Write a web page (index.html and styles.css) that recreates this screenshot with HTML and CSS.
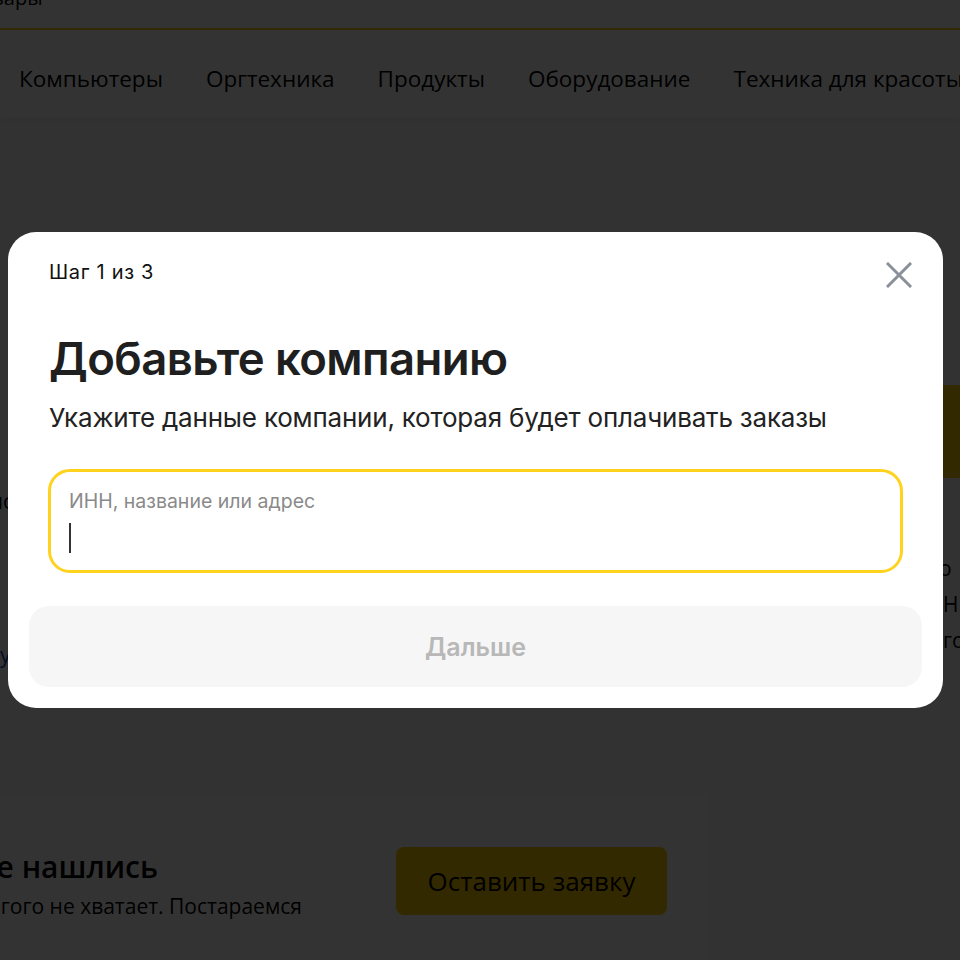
FILE: index.html
```html
<!DOCTYPE html>
<html lang="ru">
<head>
<meta charset="utf-8">
<title>Добавьте компанию</title>
<link rel="stylesheet" href="styles.css">
</head>
<body>
<div class="page">
  <header class="top">
    <span class="top-link">Все товары</span>
  </header>
  <nav class="cats">
    <span>Компьютеры</span>
    <span>Оргтехника</span>
    <span>Продукты</span>
    <span>Оборудование</span>
    <span>Техника для красоты</span>
  </nav>
  <main class="content">
    <div class="mid">
      <div class="mid-left">
        <p class="frag f1">по</p>
        <p class="frag link">у</p>
      </div>
      <div class="mid-right">
        <div class="promo"></div>
        <p class="frag f2">о</p>
        <p class="frag">Н</p>
        <p class="frag">го</p>
      </div>
    </div>
    <section class="request">
      <div class="request-text">
        <h2 class="request-title">Не нашлись</h2>
        <p class="request-desc">Расскажите, чего многого не хватает. Постараемся</p>
      </div>
      <button class="request-btn">Оставить заявку</button>
    </section>
  </main>
</div>

<div class="overlay">
  <div class="modal">
    <div class="modal-head">
      <span class="step">Шаг 1 из 3</span>
      <button class="close" aria-label="Закрыть">
        <svg width="26" height="26" viewBox="0 0 26 26"><path d="M2 2L24 24M24 2L2 24" stroke="#8a9099" stroke-width="3" stroke-linecap="square"/></svg>
      </button>
    </div>
    <h1 class="title">Добавьте компанию</h1>
    <p class="subtitle">Укажите данные компании, которая будет оплачивать заказы</p>
    <label class="field">
      <span class="field-label">ИНН, название или адрес</span>
      <span class="caret"></span>
    </label>
    <button class="next">Дальше</button>
  </div>
</div>
</body>
</html>
```

FILE: styles.css
```css
* { box-sizing: border-box; }
html, body { margin: 0; padding: 0; }
body {
  background: #fafafa;
  font-family: "Open Sans", "Noto Sans", sans-serif;
  color: #000;
  height: 960px;
  overflow: hidden;
}
.page { width: 960px; }
.top {
  height: 30px;
  background: #fff;
  border-bottom: 2px solid #ffcc00;
  overflow: hidden;
}
.top-link {
  display: block;
  margin-top: -16px;
  margin-left: -68px;
  font-size: 20px;
}
.cats {
  display: flex;
  gap: 43px;
  white-space: nowrap;
  padding: 8px 0 0 19px;
  height: 88px;
  align-items: center;
  font-size: 22.5px;
  background: #fff;
  box-shadow: 0 2px 6px rgba(0,0,0,.06);
  overflow: hidden;
}
.content { display: flex; flex-direction: column; }
.mid {
  display: flex;
  justify-content: space-between;
  height: 677px;
  padding-top: 267px;
}
.mid-left { width: 20px; overflow: hidden; padding-top: 98px; }
.mid-right { width: 17px; }
.frag { margin: 0; font-size: 21px; line-height: 36px; white-space: nowrap; }
.f1 { margin-left: -10px; }
.link { color: #1a3dc1; margin-top: 118px; }
.promo { height: 93px; background: #ffcc00; margin-bottom: 72px; }
.f2 { margin-left: -4px; }
.request {
  width: 708px;
  height: 200px;
  background: #fff;
  display: flex;
  align-items: flex-start;
  justify-content: space-between;
  padding: 52px 41px 0 0;
  overflow: hidden;
}
.request-text {
  display: flex;
  flex-direction: column;
  align-items: flex-end;
  width: 302px;
  flex-shrink: 0;
  white-space: nowrap;
}
.request-title { margin: 0 144px 0 0; font-size: 30px; font-weight: 600; line-height: 40px; }
.request-desc { margin: 4px 0 0 0; font-size: 21px; line-height: 30px; }
.request-btn {
  width: 271px;
  height: 68px;
  border: 0;
  border-radius: 8px;
  background: #ffcc00;
  font-family: "Open Sans", sans-serif;
  font-size: 26px;
  font-weight: 500;
  color: #000;
}

.overlay {
  position: fixed;
  inset: 0;
  background: rgba(0,0,0,.8);
}
.modal {
  position: absolute;
  left: 8px;
  top: 232px;
  width: 935px;
  height: 476px;
  background: #fff;
  border-radius: 28px;
  padding: 24px 21px 21px 21px;
  font-family: "Inter", "Noto Sans", sans-serif;
  color: #222;
}
.modal-head {
  display: flex;
  justify-content: space-between;
  align-items: center;
  padding-left: 20px;
  height: 32px;
}
.step { font-size: 20px; letter-spacing: 0.7px; color: #111; }
.close {
  border: 0;
  background: none;
  padding: 0;
  width: 26px;
  height: 26px;
  margin-right: 10px;
  margin-top: 6px;
  display: flex;
}
.title {
  margin: 43px 0 0 20px;
  font-size: 45.5px;
  font-weight: 600;
  letter-spacing: -0.6px;
  line-height: 56px;
  color: #1f1f1f;
}
.subtitle {
  margin: 11px 0 0 20px;
  font-size: 26px;
  letter-spacing: -0.2px;
  line-height: 40px;
  color: #222;
}
.field {
  display: flex;
  flex-direction: column;
  margin: 31px 19px 0 19px;
  height: 104px;
  border: 3px solid #ffd21e;
  border-radius: 22px;
  padding: 16px 18px;
}
.field-label {
  font-size: 19.5px;
  color: #8a8a8a;
  line-height: 26px;
}
.caret {
  width: 1.5px;
  height: 30px;
  background: #333;
  margin-top: 9px;
}
.next {
  width: 893px;
  height: 81px;
  margin-top: 33px;
  border: 0;
  border-radius: 20px;
  background: #f6f6f6;
  font-family: "Inter", "Noto Sans", sans-serif;
  font-size: 25px;
  font-weight: 600;
  color: #b8b8b8;
}
```
